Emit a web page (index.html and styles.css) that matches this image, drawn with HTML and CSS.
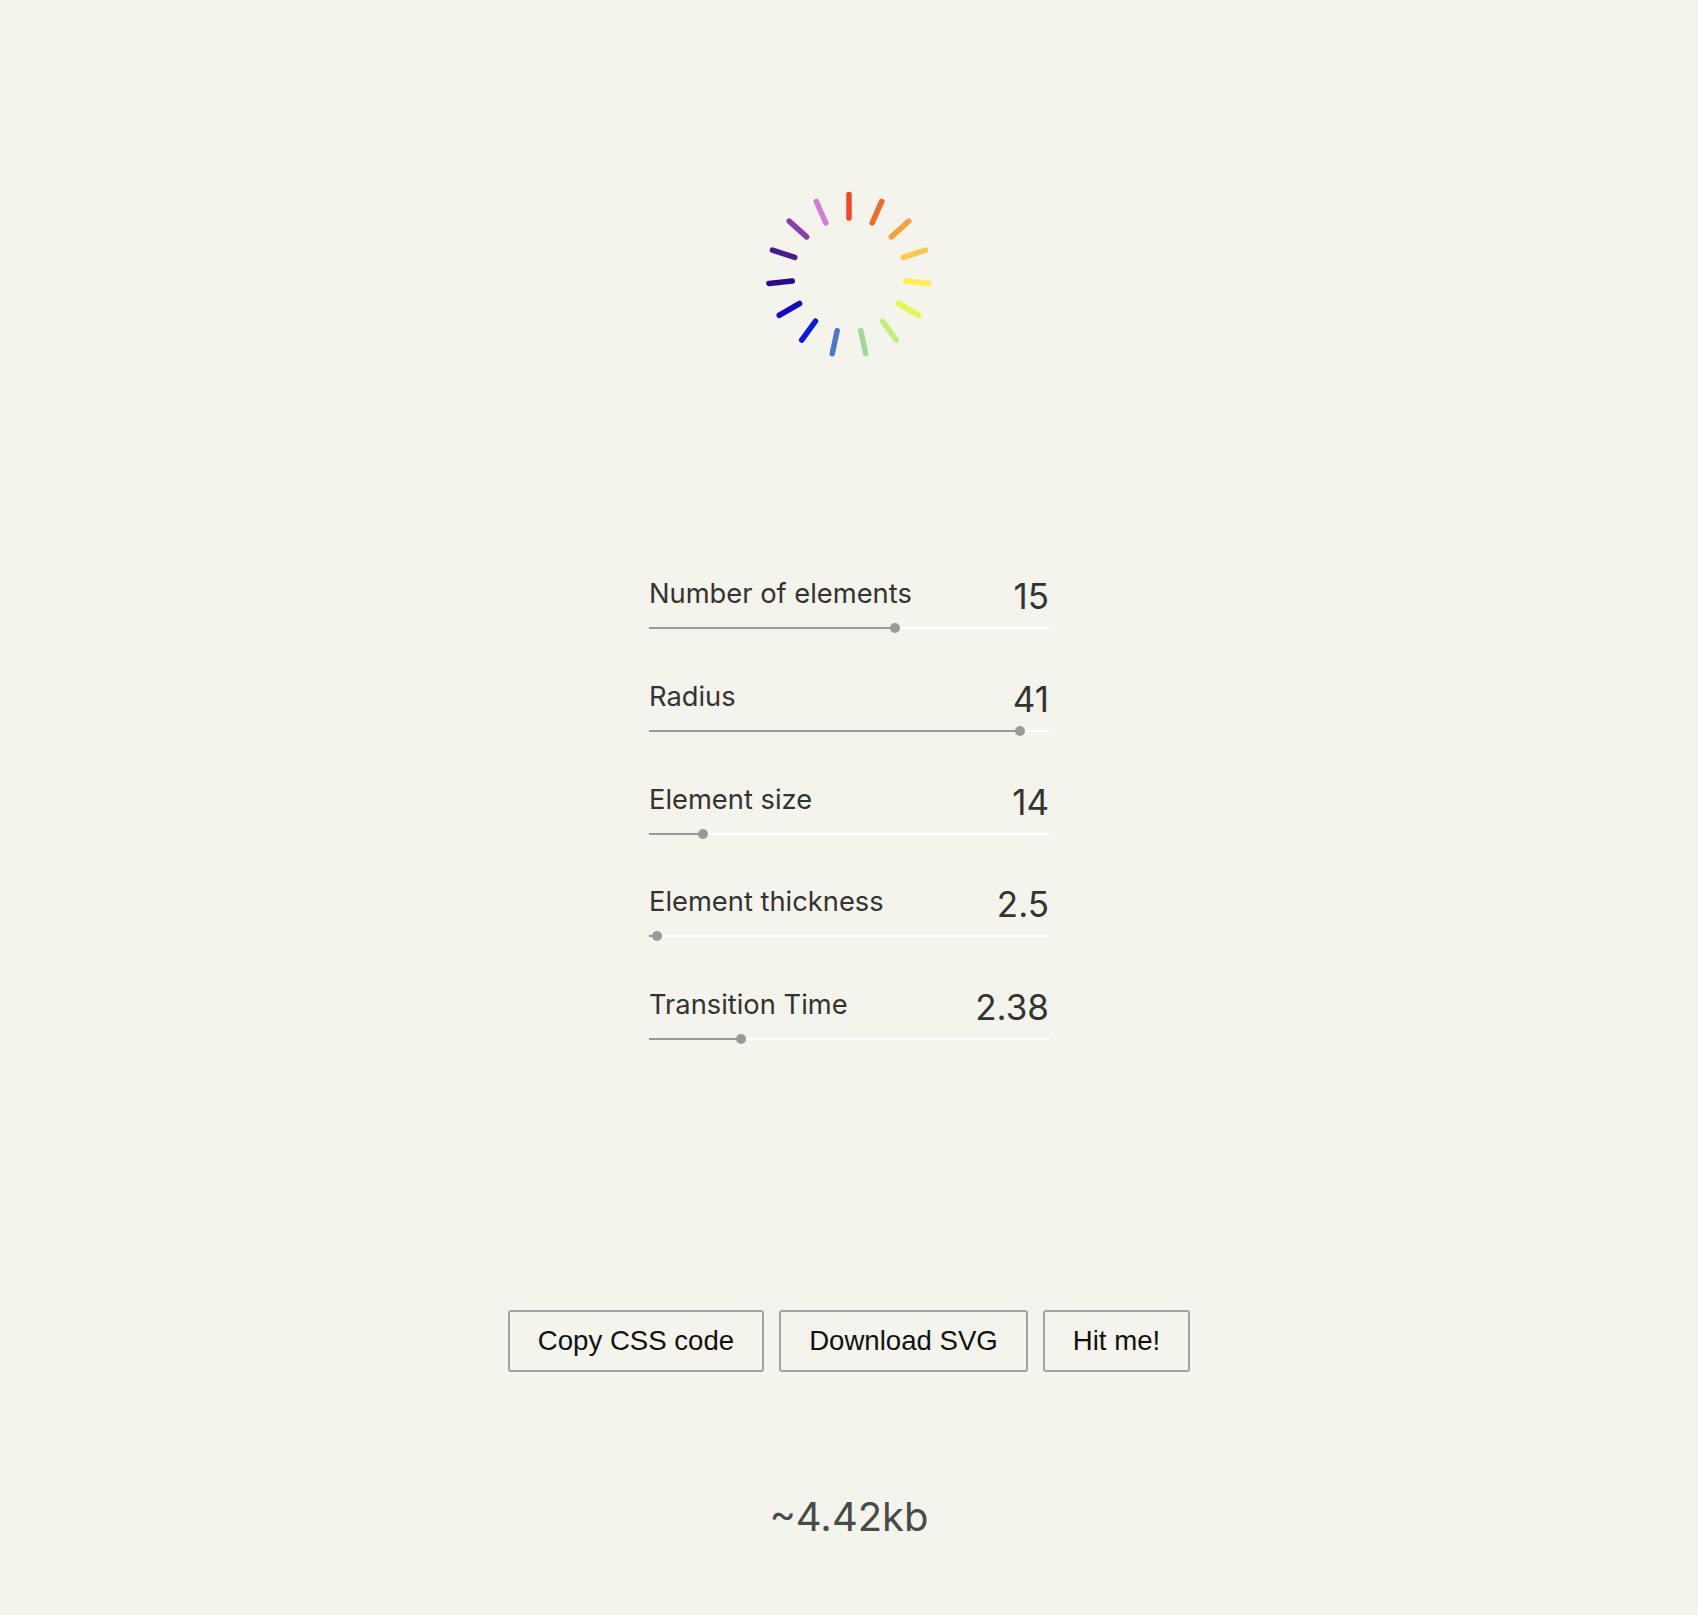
FILE: index.html
```html
<!DOCTYPE html>
<html lang="en">
<head>
<meta charset="utf-8">
<title>Spinner generator</title>
<link rel="stylesheet" href="styles.css">
</head>
<body>
<main class="page">
  <svg class="spinner" width="200" height="200" viewBox="0 0 200 200" aria-label="spinner preview">
    <g stroke-width="5.5" stroke-linecap="round" fill="none">
      <line x1="100" y1="43" x2="100" y2="19.5" stroke="#ee4a2a" transform="rotate(0 100 100)"/>
      <line x1="100" y1="43" x2="100" y2="19.5" stroke="#f06c2c" transform="rotate(24 100 100)"/>
      <line x1="100" y1="43" x2="100" y2="19.5" stroke="#f4a13c" transform="rotate(48 100 100)"/>
      <line x1="100" y1="43" x2="100" y2="19.5" stroke="#fac84a" transform="rotate(72 100 100)"/>
      <line x1="100" y1="43" x2="100" y2="19.5" stroke="#fdf04c" transform="rotate(96 100 100)"/>
      <line x1="100" y1="43" x2="100" y2="19.5" stroke="#e6f64e" transform="rotate(120 100 100)"/>
      <line x1="100" y1="43" x2="100" y2="19.5" stroke="#c0ef7c" transform="rotate(144 100 100)"/>
      <line x1="100" y1="43" x2="100" y2="19.5" stroke="#9cdb9e" transform="rotate(168 100 100)"/>
      <line x1="100" y1="43" x2="100" y2="19.5" stroke="#4e78c6" transform="rotate(192 100 100)"/>
      <line x1="100" y1="43" x2="100" y2="19.5" stroke="#0a18e6" transform="rotate(216 100 100)"/>
      <line x1="100" y1="43" x2="100" y2="19.5" stroke="#1608cc" transform="rotate(240 100 100)"/>
      <line x1="100" y1="43" x2="100" y2="19.5" stroke="#2a0894" transform="rotate(264 100 100)"/>
      <line x1="100" y1="43" x2="100" y2="19.5" stroke="#4c1a8e" transform="rotate(288 100 100)"/>
      <line x1="100" y1="43" x2="100" y2="19.5" stroke="#8c3cb0" transform="rotate(312 100 100)"/>
      <line x1="100" y1="43" x2="100" y2="19.5" stroke="#d27ed8" transform="rotate(336 100 100)"/>
    </g>
  </svg>

  <section class="controls">
    <div class="row">
      <div class="row-head"><span class="label">Number of elements</span><span class="value">15</span></div>
      <div class="track" style="--p: 0.6187"><div class="fill"></div><div class="thumb"></div></div>
    </div>
    <div class="row">
      <div class="row-head"><span class="label">Radius</span><span class="value">41</span></div>
      <div class="track" style="--p: 0.9387"><div class="fill"></div><div class="thumb"></div></div>
    </div>
    <div class="row">
      <div class="row-head"><span class="label">Element size</span><span class="value">14</span></div>
      <div class="track" style="--p: 0.1249"><div class="fill"></div><div class="thumb"></div></div>
    </div>
    <div class="row">
      <div class="row-head"><span class="label">Element thickness</span><span class="value">2.5</span></div>
      <div class="track" style="--p: 0.0069"><div class="fill"></div><div class="thumb"></div></div>
    </div>
    <div class="row">
      <div class="row-head"><span class="label">Transition Time</span><span class="value">2.38</span></div>
      <div class="track" style="--p: 0.2223"><div class="fill"></div><div class="thumb"></div></div>
    </div>
  </section>

  <div class="actions">
    <button class="btn" type="button">Copy CSS code</button>
    <button class="btn" type="button">Download SVG</button>
    <button class="btn" type="button">Hit me!</button>
  </div>

  <p class="size">~4.42kb</p>
</main>
</body>
</html>
```

FILE: styles.css
```css
html, body {
  margin: 0;
  padding: 0;
}

body {
  background: #f4f4ec;
  font-family: Inter, "Noto Sans", "DejaVu Sans", sans-serif;
  color: #333;
}

.page {
  display: flex;
  flex-direction: column;
  align-items: center;
}

.spinner {
  display: block;
  margin-top: 175px;
}

.controls {
  width: 400px;
  margin-top: 204px;
  display: flex;
  flex-direction: column;
  gap: 48.8px;
}

.row-head {
  display: flex;
  justify-content: space-between;
  align-items: flex-start;
}

.label {
  font-size: 27.3px;
  line-height: 1;
  margin-top: 1px;
  color: #333;
}

.value {
  font-size: 35px;
  line-height: 1;
  color: #333;
}

.track {
  position: relative;
  height: 10px;
  margin-top: 9px;
}

.track::before {
  content: "";
  position: absolute;
  left: 0;
  right: 0;
  top: 4px;
  height: 2px;
  background: #ffffff;
}

.fill {
  position: absolute;
  left: 0;
  top: 4px;
  height: 2px;
  width: calc(5px + var(--p) * (100% - 10px));
  background: #999999;
}

.thumb {
  position: absolute;
  top: 0;
  left: calc(var(--p) * (100% - 10px));
  width: 10px;
  height: 10px;
  border-radius: 50%;
  background: #999999;
}

.actions {
  display: flex;
  gap: 15px;
  margin-top: 266px;
}

.btn {
  height: 62px;
  padding: 0 28px;
  border: 2px solid #a2a2a2;
  border-radius: 3px;
  background: transparent;
  font-family: "Liberation Sans", Arial, sans-serif;
  font-size: 27.6px;
  color: #111;
  display: flex;
  align-items: center;
  justify-content: center;
}

.size {
  margin: 124.5px 0 0;
  font-size: 40px;
  line-height: 1;
  color: #4a4a4a;
}
```
